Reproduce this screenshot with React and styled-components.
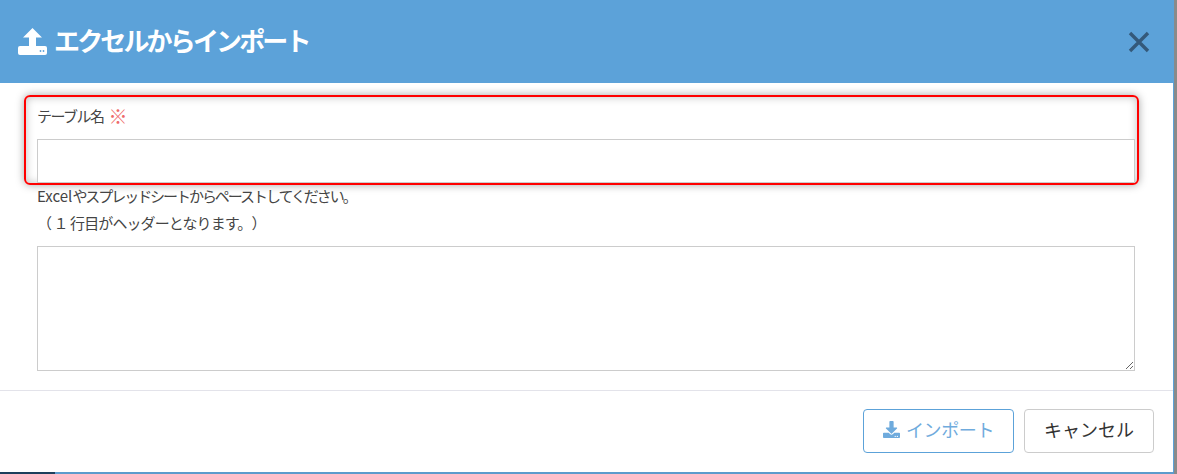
import React from 'react';
import styled, { createGlobalStyle } from 'styled-components';
import { FaDownload } from 'react-icons/fa';

const GlobalStyle = createGlobalStyle`
  html, body {
    margin: 0;
    padding: 0;
    background: #fff;
  }
  body {
    font-family: "Noto Sans CJK JP", "Noto Sans", sans-serif;
    color: #333;
    text-spacing-trim: space-all;
  }
`;

const Page = styled.div`
  width: 1177px;
  height: 474px;
  display: flex;
  overflow: hidden;
  background: #8a8a8a;
`;

const Frame = styled.div`
  display: flex;
  flex-direction: column;
`;

const Modal = styled.div`
  width: 1174px;
  height: 472px;
  box-sizing: border-box;
  display: flex;
  flex-direction: column;
  background: #fff;
  border-right: 1px solid #5ca2d9;
`;

const Header = styled.div`
  height: 83px;
  flex: none;
  display: flex;
  align-items: center;
  justify-content: space-between;
  padding: 0 23px 0 18px;
  background: #5ca2d9;
  color: #fff;
`;

const Title = styled.h2`
  display: flex;
  align-items: center;
  gap: 7px;
  margin: 0;
  font-size: 26px;
  font-weight: 700;
  line-height: 1;
  letter-spacing: -2.85px;
`;

const TitleText = styled.span`
  padding-bottom: 3px;
`;

const UploadIcon = styled.svg`
  width: 29px;
  height: 28px;
  margin-top: 1px;
  fill: #fff;
`;

const CloseIcon = styled.svg`
  width: 22px;
  height: 22px;
  stroke: #34597a;
  stroke-width: 3.4;
  fill: none;
`;

const Body = styled.div`
  flex: 1;
  display: flex;
  flex-direction: column;
  padding: 12px 34px 0 24px;
`;

const Highlight = styled.div`
  display: flex;
  flex-direction: column;
  height: 90px;
  box-sizing: border-box;
  padding: 0 2px 0 11px;
  border: 2px solid #f00;
  border-radius: 6px;
  box-shadow: 0 0 8px rgba(0, 0, 0, 0.35), inset 0 0 8px rgba(0, 0, 0, 0.25);
`;

const Label = styled.label`
  height: 42px;
  box-sizing: border-box;
  padding-bottom: 6px;
  display: flex;
  align-items: center;
  gap: 5px;
  font-size: 15px;
  letter-spacing: -1.5px;
  color: #444;
`;

const Required = styled.span`
  color: #ee6a6a;
  font-size: 19px;
  letter-spacing: 0;
`;

const TextInput = styled.input`
  height: 44px;
  box-sizing: border-box;
  border: 1px solid #ccc;
  background: #fff;
  outline: none;
`;

const Help = styled.div`
  margin: -3px 0 10px 13px;
  color: #444;
`;

const HelpLine = styled.div`
  font-size: 15px;
  line-height: 27px;
  letter-spacing: ${(p) => p.$spacing}px;
  white-space: pre;
`;

const Latin = styled.span`
  letter-spacing: 0;
`;

const TextArea = styled.textarea`
  display: block;
  width: 1098px;
  height: 125px;
  box-sizing: border-box;
  margin-left: 13px;
  border: 1px solid #ccc;
  outline: none;
  resize: vertical;
`;

const Footer = styled.div`
  height: 82px;
  flex: none;
  box-sizing: border-box;
  display: flex;
  justify-content: flex-end;
  align-items: flex-start;
  gap: 10px;
  padding: 18px 19px 0 0;
  border-top: 1px solid #e3e3ea;
`;

const Button = styled.button`
  display: flex;
  align-items: center;
  justify-content: center;
  gap: 6px;
  width: ${(p) => p.$width}px;
  height: 44px;
  box-sizing: border-box;
  padding: 0 0 4px;
  background: #fff;
  border: 1px solid ${(p) => (p.$primary ? '#5ca2d9' : '#ccc')};
  border-radius: 4px;
  color: ${(p) => (p.$primary ? '#6fabdd' : '#333')};
  font-family: inherit;
  font-size: 18px;
  letter-spacing: ${(p) => (p.$primary ? '-0.4px' : '0')};
`;

const BottomBar = styled.div`
  height: 2px;
  background: linear-gradient(to right, #1d3f5c 55px, #5c9bcc 55px);
`;

const Edge = styled.div`
  width: 3px;
  background: #8a8a8a;
`;

export default function App() {
  return (
    <>
      <GlobalStyle />
      <Page>
        <Frame>
          <Modal>
            <Header>
              <Title>
                <UploadIcon viewBox="0 0 29 28">
                  <path d="M14.5 0 L24 9.5 H18 V20 H11 V9.5 H5 Z" />
                  <rect x="0" y="18" width="29" height="9" rx="2" />
                  <circle cx="22.5" cy="23" r="0.9" fill="#5ca2d9" />
                  <circle cx="25.5" cy="23" r="0.9" fill="#5ca2d9" />
                </UploadIcon>
                <TitleText>エクセルからインポート</TitleText>
              </Title>
              <CloseIcon viewBox="0 0 22 22">
                <path d="M2 2 L20 20 M20 2 L2 20" />
              </CloseIcon>
            </Header>
            <Body>
              <Highlight>
                <Label>
                  テーブル名 <Required>※</Required>
                </Label>
                <TextInput />
              </Highlight>
              <Help>
                <HelpLine $spacing={-2.05}>
                  <Latin>Excel</Latin>やスプレッドシートからペーストしてください。
                </HelpLine>
                <HelpLine $spacing={-0.9}>（ １ 行目がヘッダーとなります。）</HelpLine>
              </Help>
              <TextArea />
            </Body>
            <Footer>
              <Button $primary $width={151}>
                <FaDownload size={17} />
                インポート
              </Button>
              <Button $width={130}>キャンセル</Button>
            </Footer>
          </Modal>
          <BottomBar />
        </Frame>
        <Edge />
      </Page>
    </>
  );
}
